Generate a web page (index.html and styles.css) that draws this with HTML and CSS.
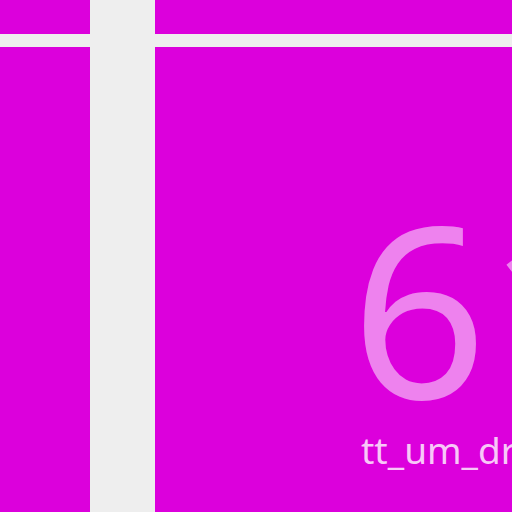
FILE: index.html
```html
<!DOCTYPE html>
<html>
<head>
<meta charset="utf-8">
<link rel="stylesheet" href="styles.css">
</head>
<body>
<div class="board">
  <div class="cell"></div>
  <div class="gap"></div>
  <div class="cell"></div>
  <div class="gap"></div>
  <div class="gap"></div>
  <div class="gap"></div>
  <div class="cell"></div>
  <div class="gap"></div>
  <div class="cell tile">
    <div class="num">61</div>
    <div class="name">tt_um_dr</div>
  </div>
</div>
</body>
</html>
```
FILE: styles.css
```css
html, body {
  margin: 0;
  padding: 0;
  width: 512px;
  height: 512px;
  overflow: hidden;
  background: #eeeeee;
}
.board {
  display: grid;
  grid-template-columns: 90px 65px 357px;
  grid-template-rows: 34px 13px 465px;
  width: 512px;
  height: 512px;
}
.cell {
  background: #dc00dc;
  overflow: hidden;
}
.gap {
  background: #eeeeee;
}
.tile {
  padding: 141px 0 0 196px;
  box-sizing: border-box;
  font-family: "Noto Sans", sans-serif;
  white-space: nowrap;
}
.num {
  font-size: 238px;
  line-height: 238px;
  color: #ee82ee;
  letter-spacing: -2px;
}
.name {
  font-size: 37px;
  line-height: 37px;
  color: #f8c8f8;
  margin-top: 5px;
  margin-left: 10px;
}
```
